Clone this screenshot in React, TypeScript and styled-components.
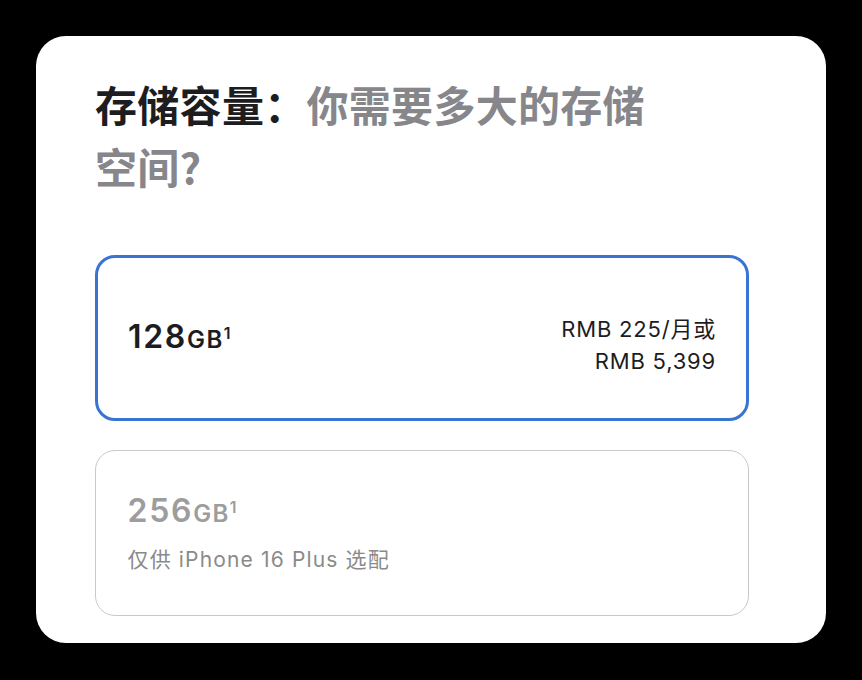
import React from "react";
import styled, { createGlobalStyle } from "styled-components";

const Global = createGlobalStyle`
  html, body {
    margin: 0;
    padding: 0;
    background: #000;
  }
  body {
    font-family: "Inter", "Noto Sans CJK SC", sans-serif;
    -webkit-font-smoothing: antialiased;
  }
`;

const Page = styled.div`
  width: 862px;
  height: 680px;
  box-sizing: border-box;
  padding: 36px;
  background: #000;
`;

const Card = styled.section`
  width: 790px;
  height: 607px;
  box-sizing: border-box;
  background: #fff;
  border-radius: 30px;
  padding: 37px 77px 28px 59px;
  overflow: hidden;
`;

const Title = styled.h2`
  margin: 0;
  max-width: 580px;
  font-family: "Noto Sans CJK SC", sans-serif;
  font-size: 42px;
  line-height: 62px;
  font-weight: 600;
  color: #1d1d1f;
  letter-spacing: 0.3px;
`;

const Muted = styled.span`
  color: #86868b;
`;

const Options = styled.div`
  margin-top: 58px;
  display: flex;
  flex-direction: column;
  gap: 29px;
`;

const Option = styled.div<{ $selected?: boolean }>`
  box-sizing: border-box;
  height: 166px;
  display: flex;
  align-items: center;
  justify-content: space-between;
  padding: 0 ${(p) => (p.$selected ? 30 : 31.5)}px;
  border-radius: 20px;
  border: ${(p) => (p.$selected ? "3px solid #3a74d2" : "1.5px solid #c9c9c9")};
`;

const Left = styled.div`
  display: flex;
  flex-direction: column;
`;

const Capacity = styled.div<{ $disabled?: boolean }>`
  font-family: "Inter", sans-serif;
  font-size: 32px;
  line-height: 36px;
  font-weight: 600;
  letter-spacing: 1.7px;
  color: ${(p) => (p.$disabled ? "#9d9d9d" : "#1d1d1f")};
`;

const Unit = styled.span`
  font-size: 24px;
  font-weight: 600;
  letter-spacing: 1.4px;
`;

const Sup = styled.sup`
  font-size: 16px;
  font-weight: 600;
  vertical-align: top;
  position: relative;
  top: -4px;
`;

const Note = styled.div`
  margin-top: 14px;
  font-size: 21px;
  line-height: 28px;
  letter-spacing: 1.15px;
  color: #8a8a8a;
`;

const Price = styled.div`
  margin-top: 14px;
  text-align: right;
  font-size: 22px;
  line-height: 32px;
  letter-spacing: 0.8px;
  color: #1d1d1f;
`;

export default function App() {
  return (
    <>
      <Global />
      <Page>
        <Card>
          <Title>
            存储容量：<Muted>你需要多大的存储空间?</Muted>
          </Title>
          <Options>
            <Option $selected>
              <Left>
                <Capacity>
                  128<Unit>GB</Unit>
                  <Sup>1</Sup>
                </Capacity>
              </Left>
              <Price>
                RMB 225/月或
                <br />
                RMB 5,399
              </Price>
            </Option>
            <Option>
              <Left>
                <Capacity $disabled>
                  256<Unit>GB</Unit>
                  <Sup>1</Sup>
                </Capacity>
                <Note>仅供 iPhone 16 Plus 选配</Note>
              </Left>
            </Option>
          </Options>
        </Card>
      </Page>
    </>
  );
}
